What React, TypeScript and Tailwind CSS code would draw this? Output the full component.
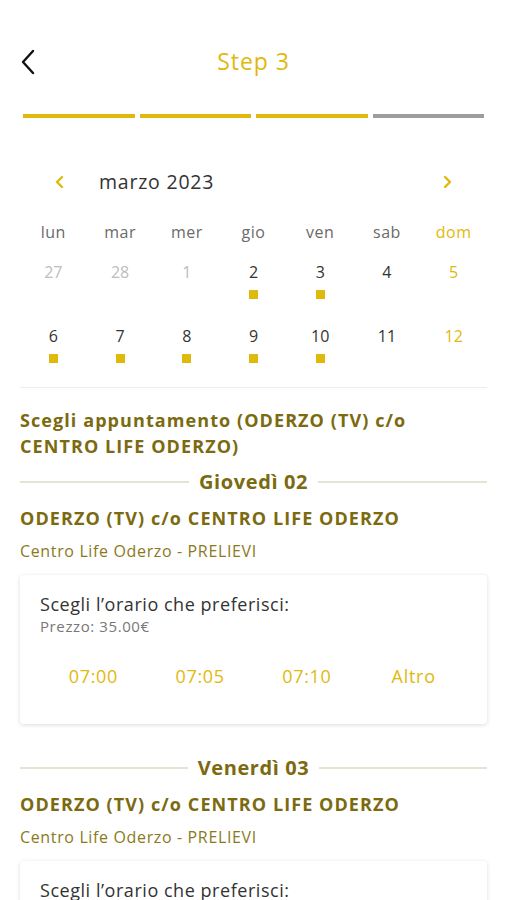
import { useState } from 'react'

const YELLOW = 'text-[#dfb90c]'
const OLIVE = 'text-[#7b6a10]'

type Day = { n: number; muted?: boolean; dot?: boolean; sun?: boolean }

const weeks: Day[][] = [
  [
    { n: 27, muted: true },
    { n: 28, muted: true },
    { n: 1, muted: true },
    { n: 2, dot: true },
    { n: 3, dot: true },
    { n: 4 },
    { n: 5, sun: true },
  ],
  [
    { n: 6, dot: true },
    { n: 7, dot: true },
    { n: 8, dot: true },
    { n: 9, dot: true },
    { n: 10, dot: true },
    { n: 11 },
    { n: 12, sun: true },
  ],
]

const weekdays = ['lun', 'mar', 'mer', 'gio', 'ven', 'sab', 'dom']

function DayTitle({ label }: { label: string }) {
  return (
    <div className="flex items-center gap-[10px]">
      <div className="h-[2px] flex-1 bg-[#e4e3d4]" />
      <span className={`text-[20px] leading-[28px] font-bold tracking-[0.03em] ${OLIVE}`}>{label}</span>
      <div className="h-[2px] flex-1 bg-[#e4e3d4]" />
    </div>
  )
}

function Slot({ label }: { label: string }) {
  return (
    <div>
      <DayTitle label={label} />
      <h3 className={`mt-[9px] text-[18px] leading-[26px] font-bold tracking-[0.06em] ${OLIVE}`}>
        ODERZO (TV) c/o CENTRO LIFE ODERZO
      </h3>
      <p className="mt-[10px] text-[16px] leading-[20px] tracking-[0.04em] text-[#8a7a1c]">
        Centro Life Oderzo - PRELIEVI
      </p>
      <div className="mt-[14px] rounded-[4px] bg-white pt-[16px] pb-[36px] shadow-[0_1px_4px_rgba(0,0,0,0.14)]">
        <p className="px-[20px] text-[18px] leading-[26px] tracking-[0.03em] text-[#333]">
          Scegli l’orario che preferisci:
        </p>
        <p className="px-[20px] text-[15px] leading-[18px] tracking-[0.04em] text-[#777]">Prezzo: 35.00€</p>
        <div
          className={`mt-[29px] grid grid-cols-4 px-[20px] text-center text-[18px] leading-[24px] tracking-[0.04em] ${YELLOW}`}
        >
          <button type="button">07:00</button>
          <button type="button">07:05</button>
          <button type="button">07:10</button>
          <button type="button">Altro</button>
        </div>
      </div>
    </div>
  )
}

export default function App() {
  const [step] = useState(3)

  return (
    <div className="mx-auto min-h-dvh max-w-[507px] overflow-hidden bg-white font-['Open_Sans','Noto_Sans',sans-serif]">
      <header className="relative mt-[40px] flex h-[42px] items-center justify-center">
        <button type="button" className="absolute left-[20px] top-[9px]">
          <svg width="16" height="26" viewBox="0 0 16 26" fill="none">
            <path d="M13 2 L3 13 L13 24" stroke="#111" strokeWidth="2.4" strokeLinecap="round" strokeLinejoin="round" />
          </svg>
        </button>
        <h1 className={`text-[23px] font-normal tracking-[0.04em] ${YELLOW}`}>Step {step}</h1>
      </header>

      <div className="mt-[32px] flex gap-[5px] px-[23px]">
        <div className="h-[4px] flex-1 bg-[#dfb90c]" />
        <div className="h-[4px] flex-1 bg-[#dfb90c]" />
        <div className="h-[4px] flex-1 bg-[#dfb90c]" />
        <div className="h-[4px] flex-1 bg-[#9d9d9d]" />
      </div>

      <section className="mx-[20px] mt-[48px]">
        <div className="flex h-[32px] items-center">
          <button type="button" className="ml-[34px]">
            <svg width="10" height="14" viewBox="0 0 10 14" fill="none">
              <path d="M8 2 L3 7 L8 12" stroke="#dfb90c" strokeWidth="2.4" strokeLinecap="round" strokeLinejoin="round" />
            </svg>
          </button>
          <span className="ml-[35px] text-[19.5px] tracking-[0.04em] text-[#333]">marzo 2023</span>
          <button type="button" className="mr-[34px] ml-auto">
            <svg width="10" height="14" viewBox="0 0 10 14" fill="none">
              <path d="M2 2 L7 7 L2 12" stroke="#dfb90c" strokeWidth="2.4" strokeLinecap="round" strokeLinejoin="round" />
            </svg>
          </button>
        </div>

        <div className="mt-[22px] grid grid-cols-7 text-center text-[16px] leading-[24px] tracking-[0.03em]">
          {weekdays.map((w) => (
            <span key={w} className={w === 'dom' ? YELLOW : 'text-[#6a6a6a]'}>
              {w}
            </span>
          ))}
        </div>

        <div className="mt-[16px] flex flex-col gap-[25px]">
          {weeks.map((week, i) => (
            <div key={i} className="grid grid-cols-7 text-center text-[16px] leading-[24px]">
              {week.map((d) => (
                <div key={d.n} className="flex h-[39px] flex-col items-center">
                  <span className={d.muted ? 'text-[#bdbdbd]' : d.sun ? YELLOW : 'text-[#333]'}>{d.n}</span>
                  {d.dot && <span className="mt-[6px] h-[9px] w-[9px] bg-[#dfb90c]" />}
                </div>
              ))}
            </div>
          ))}
        </div>

        <div className="mt-[24px] h-px bg-[#ececec]" />
      </section>

      <main className="px-[20px]">
        <h2 className={`mt-[19px] text-[18px] leading-[26px] font-bold tracking-[0.06em] ${OLIVE}`}>
          Scegli appuntamento (ODERZO (TV) c/o CENTRO LIFE ODERZO)
        </h2>
        <div className="mt-[9px] flex flex-col gap-[30px] pb-[40px]">
          <Slot label="Giovedì 02" />
          <Slot label="Venerdì 03" />
        </div>
      </main>
    </div>
  )
}
